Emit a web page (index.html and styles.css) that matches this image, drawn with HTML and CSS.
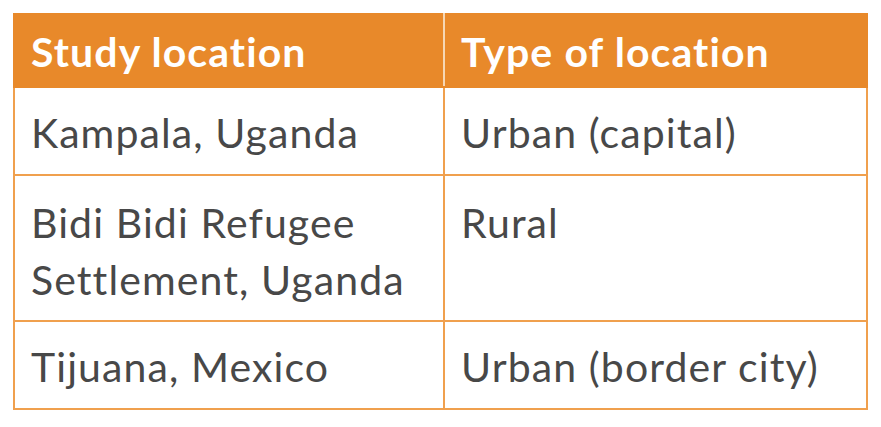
FILE: index.html
```html
<!DOCTYPE html>
<html lang="en">
<head>
<meta charset="utf-8">
<title>Study locations</title>
<link rel="stylesheet" href="styles.css">
</head>
<body>
<table class="locations">
  <thead>
    <tr>
      <th class="col-a">Study location</th>
      <th class="col-b">Type of location</th>
    </tr>
  </thead>
  <tbody>
    <tr class="row-1">
      <td>Kampala, Uganda</td>
      <td>Urban (capital)</td>
    </tr>
    <tr class="row-2">
      <td>Bidi Bidi Refugee<br>Settlement, Uganda</td>
      <td>Rural</td>
    </tr>
    <tr class="row-3">
      <td>Tijuana, Mexico</td>
      <td>Urban (border city)</td>
    </tr>
  </tbody>
</table>
</body>
</html>
```

FILE: styles.css
```css
html, body {
  margin: 0;
  padding: 0;
  background: #ffffff;
}

body {
  padding: 13px 0 0 13px;
  font-family: Lato, "Open Sans", sans-serif;
  font-variant-ligatures: none;
}

.locations {
  border-collapse: collapse;
  width: 855px;
  table-layout: fixed;
}

.locations th,
.locations td {
  text-align: left;
  vertical-align: top;
  padding: 0 16px;
  font-size: 41px;
  line-height: 57px;
}

.locations th {
  background: #e8892a;
  color: #ffffff;
  font-weight: 700;
  letter-spacing: 1.1px;
  height: 73px;
  padding-top: 8px;
  padding-bottom: 0;
  box-sizing: border-box;
  border: 2px solid #e8892a;
}

.locations th.col-a {
  width: 430px;
  border-right: 2px solid #f6d7b4;
}

.locations td {
  color: #484848;
  letter-spacing: 1.1px;
  border: 2px solid #f0a04e;
  padding-top: 16px;
  padding-bottom: 13px;
}

.locations .row-2 td {
  padding-top: 18px;
  padding-bottom: 12px;
}
```
